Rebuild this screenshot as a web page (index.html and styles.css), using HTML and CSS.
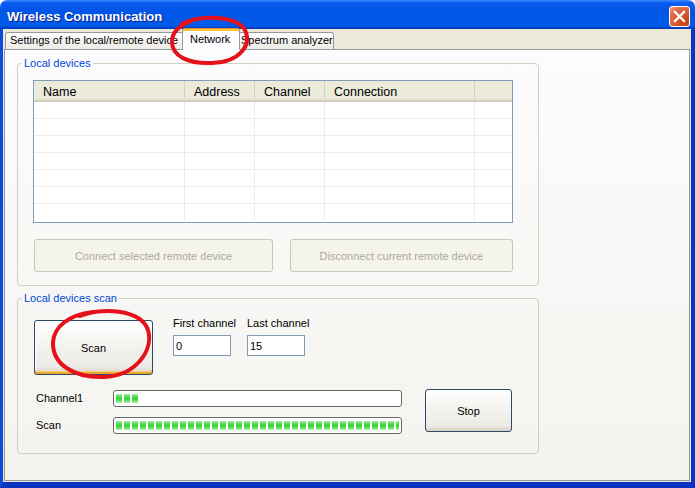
FILE: index.html
```html
<!DOCTYPE html>
<html lang="en">
<head>
<meta charset="utf-8">
<title>Wireless Communication</title>
<link rel="stylesheet" href="styles.css">
</head>
<body>
<div class="window">
  <div class="titlebar">
    <span class="title">Wireless Communication</span>
    <span class="close" aria-label="Close">
      <svg width="19" height="19" viewBox="0 0 19 19"><path d="M5 5 L14 14 M14 5 L5 14" stroke="#fff" stroke-width="2.4" stroke-linecap="square"/></svg>
    </span>
  </div>
  <div class="frame">
    <div class="dialog">
      <div class="tabs">
        <div class="tab tab-settings">Settings of the local/remote device</div>
        <div class="tab active">Network</div>
        <div class="tab tab-spectrum">Spectrum analyzer</div>
      </div>
      <div class="panel">
        <fieldset class="group group-devices">
          <legend>Local devices</legend>
          <div class="group-body devices-body">
            <div class="listview">
              <div class="lv-header">
                <div class="hcell">Name</div>
                <div class="hcell">Address</div>
                <div class="hcell">Channel</div>
                <div class="hcell">Connection</div>
                <div class="hcell last"></div>
              </div>
              <div class="lv-body">
                <div class="lv-row"><div class="cell"></div><div class="cell"></div><div class="cell"></div><div class="cell"></div><div class="cell last"></div></div>
                <div class="lv-row"><div class="cell"></div><div class="cell"></div><div class="cell"></div><div class="cell"></div><div class="cell last"></div></div>
                <div class="lv-row"><div class="cell"></div><div class="cell"></div><div class="cell"></div><div class="cell"></div><div class="cell last"></div></div>
                <div class="lv-row"><div class="cell"></div><div class="cell"></div><div class="cell"></div><div class="cell"></div><div class="cell last"></div></div>
                <div class="lv-row"><div class="cell"></div><div class="cell"></div><div class="cell"></div><div class="cell"></div><div class="cell last"></div></div>
                <div class="lv-row"><div class="cell"></div><div class="cell"></div><div class="cell"></div><div class="cell"></div><div class="cell last"></div></div>
                <div class="lv-row end"><div class="cell"></div><div class="cell"></div><div class="cell"></div><div class="cell"></div><div class="cell last"></div></div>
              </div>
            </div>
            <div class="actions">
              <button class="btn disabled btn-connect" disabled>Connect selected remote device</button>
              <button class="btn disabled btn-disconnect" disabled>Disconnect current remote device</button>
            </div>
          </div>
        </fieldset>
        <fieldset class="group group-scan">
          <legend>Local devices scan</legend>
          <div class="group-body scan-body">
            <div class="scan-top">
              <button class="btn btn-scan">Scan</button>
              <div class="fields">
                <label class="field">
                  <span class="field-label">First channel</span>
                  <input class="field-input" type="text" value="0">
                </label>
                <label class="field">
                  <span class="field-label">Last channel</span>
                  <input class="field-input" type="text" value="15">
                </label>
              </div>
            </div>
            <div class="scan-bottom">
              <div class="progress-grid">
                <span class="p-label">Channel1</span>
                <div class="progress"><div class="fill" style="width:22px"></div></div>
                <span class="p-label">Scan</span>
                <div class="progress"><div class="fill" style="width:100%"></div></div>
              </div>
              <button class="btn btn-stop">Stop</button>
            </div>
          </div>
        </fieldset>
      </div>
    </div>
  </div>
  <svg class="annotations" width="695" height="488" viewBox="0 0 695 488">
    <path d="M182 24 C200 15, 236 15, 245 30 C252 45, 240 62, 212 63 C188 64, 172 56, 172 42 C172 33, 177 27, 191 21" fill="none" stroke="#e5121b" stroke-width="4" stroke-linecap="round"/>
    <path d="M80 316 C100 307, 141 309, 148 330 C154 351, 135 376, 104 377 C75 378, 52 365, 53 342 C54 327, 68 315, 93 312" fill="none" stroke="#e5121b" stroke-width="4" stroke-linecap="round"/>
  </svg>
</div>
</body>
</html>
```

FILE: styles.css
```css
* { box-sizing: border-box; }
html, body { margin: 0; padding: 0; background: #fff; }
body {
  font-family: "Liberation Sans", Arial, sans-serif;
  font-size: 11px;
  color: #000;
}

.window {
  position: relative;
  width: 695px;
  height: 488px;
  display: flex;
  flex-direction: column;
}

/* Title bar */
.titlebar {
  height: 29px;
  flex: none;
  display: flex;
  align-items: flex-start;
  justify-content: space-between;
  padding: 6px 5px 0 7px;
  border-radius: 7px 7px 0 0;
  background: linear-gradient(#3a8cff 0, #0a5cf0 10%, #0054e6 40%, #005ceb 85%, #0053de 92%, #003dc4 96%, #0036b8 100%);
}
.title {
  color: #fff;
  font-weight: bold;
  font-size: 13px;
  line-height: 21px;
  text-shadow: 1px 1px #0f1a89;
}
.close {
  width: 21px;
  height: 21px;
  border: 1px solid #fff;
  border-radius: 3px;
  background: radial-gradient(circle at 85% 85%, #c3411a 0%, #d8582e 50%, #e0714d 75%, #f0a88e 100%);
  display: flex;
  align-items: center;
  justify-content: center;
}
.close svg { display: block; }

/* Frame */
.frame {
  flex: 1;
  display: flex;
  border-left: 3px solid #0b4be0;
  border-right: 4px solid #0735c8;
  border-bottom: 6px solid #0a34c0;
}
.dialog {
  flex: 1;
  display: flex;
  flex-direction: column;
  background: #ece9d8;
}

/* Tabs */
.tabs {
  height: 20px;
  flex: none;
  display: flex;
  align-items: flex-end;
  padding-left: 2px;
}
.tab {
  height: 17px;
  border: 1px solid #919b9c;
  border-bottom: 0;
  border-radius: 3px 3px 0 0;
  background: linear-gradient(#fff, #f3f2ee 60%, #ecebe6);
  line-height: 15px;
  white-space: nowrap;
  overflow: hidden;
}
.tab-settings { width: 179px; padding-left: 4px; }
.tab-spectrum { width: 96px; padding-left: 2px; }
.tab.active {
  position: relative;
  z-index: 1;
  width: 58px;
  height: 22px;
  margin: 0 -2px -1px;
  padding: 3px 0 0 7px;
  background: #fcfcfe;
  border-top-color: #e68b2c;
  box-shadow: inset 0 2px #ffc73c;
}

/* Panel */
.panel {
  flex: 1;
  margin: 0 1px 1px 1px;
  border: 1px solid #919b9c;
  background: linear-gradient(#fcfcfe, #f4f3ee);
  padding: 7px 0 0 12px;
}

/* Group boxes */
.group {
  width: 522px;
  margin: 0;
  padding: 0;
  border: 1px solid #d0d0bf;
  border-radius: 4px;
  min-width: 0;
}
.group legend {
  margin-left: 4px;
  padding: 0 2px;
  color: #0046d5;
  font-size: 11px;
  line-height: 13px;
}
.group-scan { margin-top: 6px; }

.devices-body { padding: 10px 0 13px 15px; }
.scan-body { padding: 12px 0 19px 16px; }

/* List view */
.listview {
  width: 480px;
  height: 143px;
  border: 1px solid #7f9db9;
  background: #fff;
  overflow: hidden;
}
.lv-header, .lv-row {
  display: grid;
  grid-template-columns: 151px 70px 70px 150px 1fr;
}
.lv-header {
  height: 21px;
  background: #ebeadb;
  box-shadow: inset 0 -1px #cbc7b8, inset 0 -2px #d6d2c2, inset 0 -3px #e2decd;
}
.hcell {
  padding: 3px 0 0 9px;
  line-height: 16px;
  font-size: 12.5px;
  border-right: 1px solid #d4d0c0;
  height: 18px;
  white-space: nowrap;
}
.hcell.last { border-right: 0; }
.lv-row { height: 17px; border-bottom: 1px solid #eeede4; }
.lv-row.end { border-bottom: 0; }
.cell { border-right: 1px solid #eeede4; }
.cell.last { border-right: 0; }

/* Buttons */
.btn {
  font-family: inherit;
  font-size: 11px;
  color: #000;
  border: 1px solid #2c4a68;
  border-radius: 3px;
  background: linear-gradient(#fff, #f5f4f0 40%, #ecebe6 86%, #d6d0c5);
  padding: 0;
  cursor: default;
}
.btn.disabled {
  border-color: #c9c7ba;
  background: #f5f4ea;
  color: #aca899;
}
.actions {
  display: flex;
  gap: 17px;
  margin: 16px 0 0 1px;
}
.btn-connect { width: 239px; height: 33px; }
.btn-disconnect { width: 223px; height: 33px; }

.btn-scan {
  width: 119px;
  height: 55px;
  margin-top: 3px;
  box-shadow: inset 0 -2px #e8a92e, inset 0 -3px #f7d27a, inset 1px 1px #fff;
}
.btn-stop { width: 87px; height: 43px; }

/* Scan area */
.scan-top {
  display: flex;
  align-items: flex-start;
}
.fields {
  display: grid;
  grid-template-columns: 74px 74px;
  margin-left: 20px;
}
.field {
  display: flex;
  flex-direction: column;
}
.field-label { line-height: 13px; white-space: nowrap; }
.field-input {
  width: 58px;
  height: 21px;
  margin-top: 5px;
  border: 1px solid #7f9db9;
  background: #fff;
  padding: 0 2px;
  font-family: inherit;
  font-size: 11px;
  color: #000;
  outline: none;
}

.scan-bottom {
  display: flex;
  align-items: flex-start;
  margin-top: 14px;
}
.progress-grid {
  display: grid;
  grid-template-columns: 79px 289px;
  row-gap: 10px;
  align-items: center;
  margin-top: 1px;
}
.p-label { padding-left: 2px; line-height: 13px; }
.progress {
  height: 17px;
  border: 1px solid #686868;
  border-radius: 3px;
  background: #fff;
  padding: 3px 2px;
}
.fill {
  height: 9px;
  background:
    repeating-linear-gradient(90deg, transparent 0 6px, #fff 6px 8px),
    linear-gradient(#a9eca8 0%, #6fe06c 20%, #35d532 45%, #3fd83c 60%, #79e377 82%, #b5efb3 100%);
}
.btn-stop { margin-left: 23px; }

/* Hand-drawn annotations over the screenshot */
.annotations {
  position: absolute;
  left: 0;
  top: 0;
  pointer-events: none;
}
```
